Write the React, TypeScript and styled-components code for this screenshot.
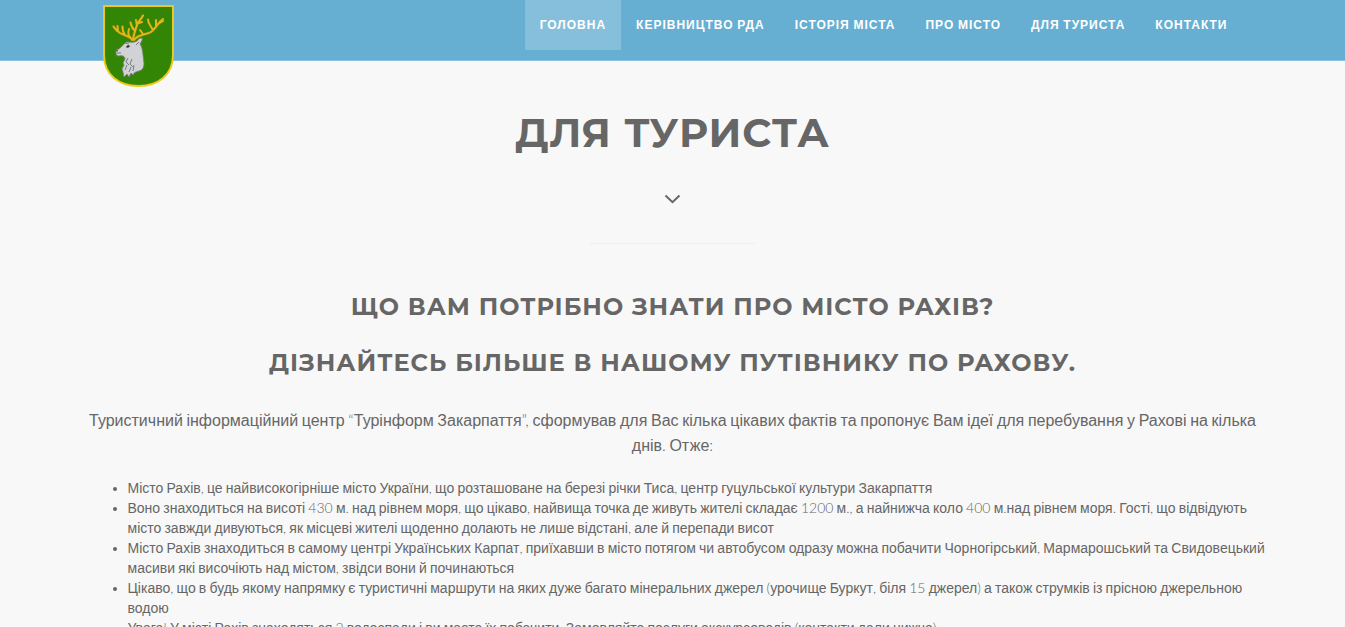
import React from "react";
import styled, { createGlobalStyle } from "styled-components";

const GlobalStyle = createGlobalStyle`
  * {
    box-sizing: border-box;
  }
  body {
    margin: 0;
    background: #f8f8f8;
    color: #666;
    font-family: "Liberation Sans", Arial, sans-serif;
    font-size: 14px;
    font-weight: 300;
    line-height: 20px;
  }
`;

const Header = styled.header`
  height: 61px;
  background: #67afd2;
  border-bottom: 1px solid #8bc2dd;
`;

const Container = styled.div`
  max-width: 1170px;
  margin: 0 auto;
`;

const HeaderRow = styled(Container)`
  display: flex;
  justify-content: space-between;
  align-items: flex-start;
  padding: 0 15px;
`;

const LogoLink = styled.a`
  display: block;
  padding-top: 5px;
  svg {
    display: block;
  }
`;

const Menu = styled.ul`
  display: flex;
  margin: 0;
  padding: 0;
  list-style: none;
`;

const MenuLink = styled.a<{ $active?: boolean }>`
  display: block;
  padding: 15px;
  background: ${({ $active }) => ($active ? "#86bfdb" : "transparent")};
  color: #fff;
  font-size: 12px;
  font-weight: 700;
  letter-spacing: 1px;
  line-height: 20px;
  text-decoration: none;
  white-space: nowrap;
`;

const Content = styled(Container).attrs({ as: "main" })`
  padding-top: 47px;
`;

const Title = styled.h1`
  margin: 0;
  font-family: Montserrat, Inter, sans-serif;
  font-size: 40px;
  font-weight: 700;
  letter-spacing: 1px;
  line-height: 50px;
  text-align: center;
`;

const Divider = styled.div`
  display: flex;
  flex-direction: column;
  align-items: center;
  gap: 39px;
  padding-top: 36px;
`;

const Rule = styled.hr`
  width: 165px;
  margin: 0;
  border: 0;
  border-top: 1px solid #eee;
`;

const Headings = styled.div`
  display: flex;
  flex-direction: column;
  gap: 26px;
  padding-top: 48px;
`;

const Heading = styled.h2`
  margin: 0;
  font-family: Montserrat, Inter, sans-serif;
  font-size: 24px;
  font-weight: 700;
  letter-spacing: 1px;
  line-height: 30px;
  text-align: center;
`;

const Lead = styled.p`
  margin: 0;
  padding-top: 30px;
  font-size: 16px;
  line-height: 25px;
  text-align: center;
`;

const Facts = styled.ul`
  margin: 0 -15px 0 0;
  padding: 20px 0 0 40px;
`;

const Text = styled.span`
  font-family: Carlito, Lato, "Liberation Sans", sans-serif;
  line-height: 1;
`;

const Word = styled.span`
  font-family: "Liberation Sans", Arial, sans-serif;
`;

const Figure = styled.span`
  font-family: Lato, "Liberation Sans", sans-serif;
`;

/* Words take Arial's shapes, figures and punctuation take Lato's. */
function Copy({ text }: { text: string }) {
  return (
    <Text>
      {text.split(/([\u0400-\u04ff]+|\s+)/).map((run, i) => {
        if (!run.trim()) return run;
        return i % 2 ? <Word key={i}>{run}</Word> : <Figure key={i}>{run}</Figure>;
      })}
    </Text>
  );
}

function Crest() {
  return (
    <svg width="71" height="83" viewBox="0 0 71 83" role="img" aria-label="Герб Рахова">
      <path
        d="M1 1H70V50C70 70 55 81 35.500 81C16 81 1 70 1 50Z"
        fill="#338605"
        stroke="#ecc91d"
        strokeWidth="2"
      />
      <g fill="none" stroke="#8a7a0c" strokeWidth="3" strokeLinecap="round" strokeLinejoin="round" opacity="0.600">
        <path d="M29 35C28 31 22 31 17 28C14 26 12 24 10.500 21.500M30 34C31 29 32 26 34 20L40 10.500M31 35C35 29 43 30 48 27C53 24 54 18 60 14" />
      </g>
      <g fill="none" stroke="#e3b517" strokeWidth="2" strokeLinecap="round" strokeLinejoin="round">
        <path d="M29 35C28 31 22 31 17 28C14 26 12 24 10.500 21.500M15 26.500L14.500 21M22 30C20 27 19 25 19.500 21.500" />
        <path d="M30 34C31 29 32 26 34 20C35 16 38 15 40 10.500M32 26C29 23 28 21 27.500 17.500M27 32C25 30 25 27 26 24M34 21L33 15M36 18L39 17" />
        <path d="M31 35C35 29 43 30 48 27C53 24 54 18 60 14M50 25C48 21 45 19 45 14.500M53 22L53 15M40 29L37 25M55 19L60 16" />
      </g>
      <path
        d="M24 37C27 37 31 38 34 36C35 34 37 33 39 33C40 35 38 37 37 39C40 43 40 52 41 58C41 62 40 65 36 66C33 67 31 67 30 70L28 68L26 72L24 69L21 72L20 67L19 64L21 60L20 58L22 54C22 51 19 50 16 51C14 51 13 50 13 48L13 45C17 44 19 41 21 39C22 38 23 37 24 37Z"
        fill="#d0d2d5"
        stroke="#777f75"
        strokeWidth="0.800"
      />
      <path
        d="M14 48L18 48M25 53L23 57L26 60M29 54L27 59L30 62M24 60L22 65M28 62L26 67M31 60L30 66M33 40L36 37M22 38L26 39"
        fill="none"
        stroke="#6f7576"
        strokeWidth="0.900"
      />
      <path d="M23 42C24 40 26 40 27 41C26 43 24 43 23 42Z" fill="#2d3330" />
      <path d="M13 45L15 45L14 47Z" fill="#3a403c" />
    </svg>
  );
}

function Chevron() {
  return (
    <svg width="17" height="10" viewBox="0 0 17 10" aria-hidden="true">
      <path d="M1.500 1.500L8.500 8.200L15.500 1.500" fill="none" stroke="#666" strokeWidth="2" />
    </svg>
  );
}

const menu = ["ГОЛОВНА", "КЕРІВНИЦТВО РДА", "ІСТОРІЯ МІСТА", "ПРО МІСТО", "ДЛЯ ТУРИСТА", "КОНТАКТИ"];

const facts = [
  "Місто Рахів, це найвисокогірніше місто України, що розташоване на березі річки Тиса, центр гуцульської культури Закарпаття",
  "Воно знаходиться на висоті 430 м. над рівнем моря, що цікаво, найвища точка де живуть жителі складає 1200 м., а найнижча коло 400 м.над рівнем моря. Гості, що відвідують місто завжди дивуються, як місцеві жителі щоденно долають не лише відстані, але й перепади висот",
  "Місто Рахів знаходиться в самому центрі Українських Карпат, приїхавши в місто потягом чи автобусом одразу можна побачити Чорногірський, Мармарошський та Свидовецький масиви які височіють над містом, звідси вони й починаються",
  "Цікаво, що в будь якому напрямку є туристичні маршрути на яких дуже багато мінеральних джерел (урочище Буркут, біля 15 джерел) а також струмків із прісною джерельною водою",
  "Увага! У місті Рахів знаходяться 2 водоспади і ви маєте їх побачити. Замовляйте послуги екскурсоводів (контакти дали нижче)",
];

export default function App() {
  return (
    <>
      <GlobalStyle />
      <Header>
        <HeaderRow>
          <LogoLink href="#" aria-label="На головну">
            <Crest />
          </LogoLink>
          <nav>
            <Menu>
              {menu.map((label, i) => (
                <li key={label}>
                  <MenuLink href="#" $active={i === 0}>
                    <Copy text={label} />
                  </MenuLink>
                </li>
              ))}
            </Menu>
          </nav>
        </HeaderRow>
      </Header>
      <Content>
        <Title>ДЛЯ ТУРИСТА</Title>
        <Divider>
          <Chevron />
          <Rule />
        </Divider>
        <Headings>
          <Heading>ЩО ВАМ ПОТРІБНО ЗНАТИ ПРО МІСТО РАХІВ?</Heading>
          <Heading>ДІЗНАЙТЕСЬ БІЛЬШЕ В НАШОМУ ПУТІВНИКУ ПО РАХОВУ.</Heading>
        </Headings>
        <Lead>
          <Copy text="Туристичний інформаційний центр “Турінформ Закарпаття”, сформував для Вас кілька цікавих фактів та пропонує Вам ідеї для перебування у Рахові на кілька днів. Отже:" />
        </Lead>
        <Facts>
          {facts.map((fact) => (
            <li key={fact}>
              <Copy text={fact} />
            </li>
          ))}
        </Facts>
      </Content>
    </>
  );
}
